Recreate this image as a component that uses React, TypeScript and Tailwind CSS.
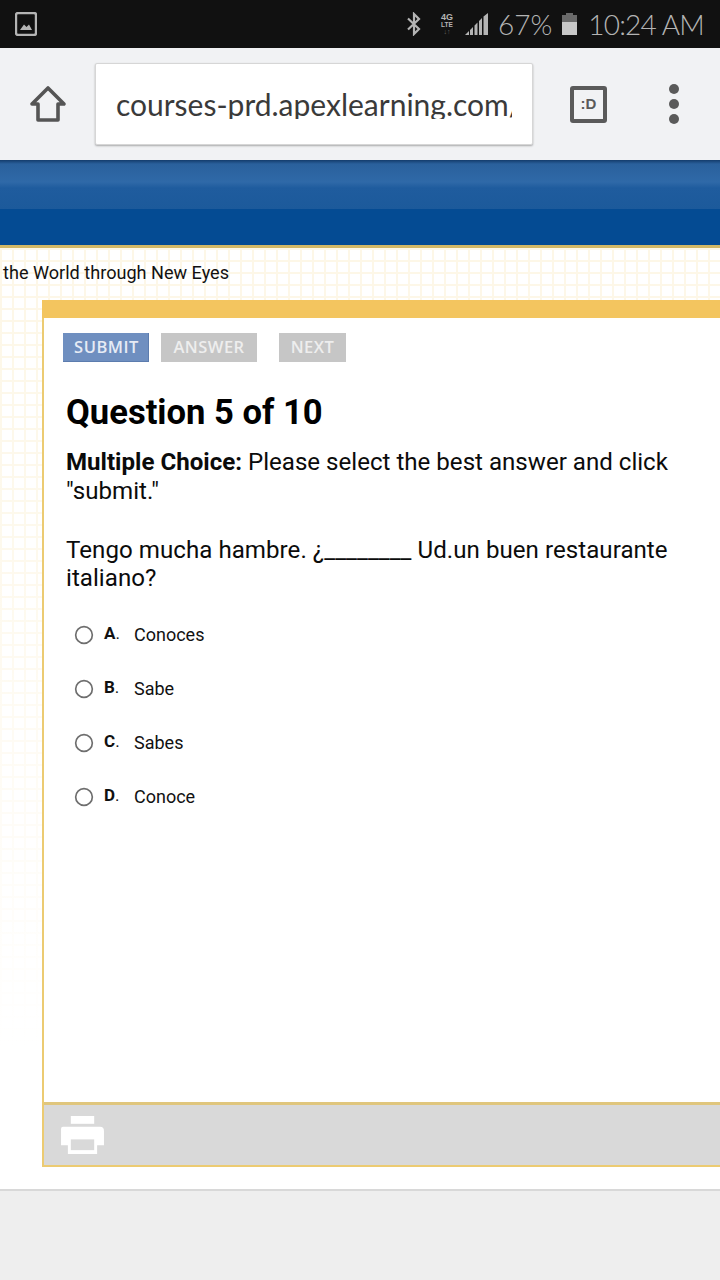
import { Circle } from 'lucide-react'

const hand = { fontFamily: '"Lato", "Open Sans", sans-serif' }

function StatusBar() {
  return (
    <div className="h-12 bg-[#111111] flex items-center pl-[15px] pr-[16px] text-[#b4b4b4]">
      <svg width="22" height="24" viewBox="0 0 22 24" fill="none">
        <rect x="1" y="1" width="20" height="22" rx="2" stroke="#b4b4b4" strokeWidth="2.4" />
        <path d="M5 18 L9 12.5 L11.5 15 L14 12.5 L17 18 Z" fill="#b4b4b4" />
      </svg>
      <div className="ml-auto flex items-center">
        <svg width="16" height="24" viewBox="0 0 16 24" fill="none" stroke="#b4b4b4" strokeWidth="2.2">
          <path d="M2 6.5 L13 17 L8 22 V2 L13 7 L2 17.5" />
        </svg>
        <div className="ml-[18px] mr-[1px] w-[14px] flex flex-col items-center leading-none text-[#b4b4b4]" style={{ fontFamily: '"Liberation Sans", sans-serif' }}>
          <span className="text-[9px] font-bold h-[8px] leading-[8px]">4G</span>
          <span className="text-[6.5px] font-bold h-[7px] leading-[7px]">LTE</span>
          <span className="text-[7px] h-[7px] leading-[7px] text-[#666666]">↓↑</span>
        </div>
        <svg className="ml-[10px]" width="24" height="24" viewBox="0 0 24 24" fill="#b4b4b4">
          <path d="M0 23 L4 19 V23 Z M5 23 V18 L8 15 V23 Z M9.500 23 V13.500 L12.500 10.500 V23 Z M14 23 V9 L17 6 V23 Z M18.500 23 V4.500 L23 1 V23 Z" />
        </svg>
        <span className="ml-[9px] text-[28px] leading-none font-light" style={hand}>67%</span>
        <svg className="ml-[9px]" width="17" height="24" viewBox="0 0 17 24">
          <rect x="5" y="1" width="7" height="3" fill="#6a6a6a" />
          <rect x="1" y="3" width="15" height="8" fill="#6a6a6a" />
          <rect x="1" y="10" width="15" height="13" fill="#c8c8c8" />
        </svg>
        <span className="ml-[10px] text-[28px] leading-none font-light tracking-[-0.8px]" style={hand}>10:24 AM</span>
      </div>
    </div>
  )
}

function BrowserBar() {
  return (
    <div className="h-28 bg-[#f1f2f4] flex items-center pl-[29px]">
      <svg width="38" height="38" viewBox="0 0 38 38" fill="none" stroke="#555555" strokeWidth="3.600" strokeLinejoin="round">
        <path d="M19 3 L35 19 H29 V35 H9 V19 H3 Z" />
      </svg>
      <div className="ml-[28px] w-[438px] h-[82px] bg-white rounded-[2px] border border-[#d6d6d6] shadow-[0_1px_2px_rgba(0,0,0,0.3)] flex items-center pl-[20px] overflow-hidden">
        <span className="text-[30px] leading-none text-[#3a3a3a] whitespace-nowrap w-[396px] overflow-hidden" style={hand}>
          courses-prd.apexlearning.com/
        </span>
      </div>
      <div className="ml-[37px] w-[37px] h-[37px] mt-px border-[4px] border-[#5a5a5a] rounded-[3px] flex items-center justify-center text-[15px] font-bold text-[#5a5a5a]" style={{ fontFamily: '"Liberation Sans", sans-serif' }}>
        :D
      </div>
      <div className="ml-[62px] flex flex-col gap-[5px]">
        <div className="w-[10px] h-[10px] rounded-full bg-[#5a5a5a]" />
        <div className="w-[10px] h-[10px] rounded-full bg-[#5a5a5a]" />
        <div className="w-[10px] h-[10px] rounded-full bg-[#5a5a5a]" />
      </div>
    </div>
  )
}

function Banner() {
  return (
    <div className="h-[88px] flex flex-col">
      <div className="h-[49px] bg-[linear-gradient(#143c6c_0px,#2a609c_4px,#2f69a8_22px,#1f5c9e_28px,#1c5a9b_49px)]" />
      <div className="h-[36px] bg-[#044b93]" />
      <div className="h-[3px] bg-[#d2b865]" />
    </div>
  )
}

const options = [
  { letter: 'A', text: 'Conoces' },
  { letter: 'B', text: 'Sabe' },
  { letter: 'C', text: 'Sabes' },
  { letter: 'D', text: 'Conoce' },
]

function Option({ letter, text }: { letter: string; text: string }) {
  return (
    <div className="h-[54px] flex items-center text-[18px] text-[#111111] pl-[30px]">
      <Circle size={20} strokeWidth={2} className="text-[#6e6e6e] mt-[2px]" />
      <span className="ml-[10px] w-[30px] -mt-[1px] text-[17px]">
        <span className="font-bold">{letter}</span>.
      </span>
      <span>{text}</span>
    </div>
  )
}

function Card() {
  return (
    <div className="ml-[42px] mt-[15px] h-[867px] border-l-2 border-b-2 border-[#eccb72] flex flex-col bg-white">
      <div className="h-[18px] -ml-[2px] bg-[#f3c55f] shrink-0" />
      <div className="flex-1 flex flex-col">
        <div className="flex mt-[15px] ml-[19px] text-[16.5px] font-semibold text-[#e6ebf5] tracking-[0.5px] h-[29px]" style={{ fontFamily: '"Open Sans", sans-serif' }}>
          <div className="w-[86px] pl-[2px] bg-[#6f8fc0] border-b border-r border-[#5c7cae] flex items-center justify-center">SUBMIT</div>
          <div className="ml-[12px] w-[96px] bg-[#c6c6c6] text-[#eeeeee] flex items-center justify-center">ANSWER</div>
          <div className="ml-[22px] w-[67px] bg-[#c6c6c6] text-[#eeeeee] flex items-center justify-center">NEXT</div>
        </div>
        <div className="ml-[22px] mt-[29px] text-[34.6px] leading-[42px] font-bold text-black">Question 5 of 10</div>
        <p className="ml-[22px] mt-[15px] w-[620px] text-[24.1px] leading-[29px] text-[#0b0b0b]">
          <span className="font-bold">Multiple Choice:</span> Please select the best answer and click "submit."
        </p>
        <p className="ml-[22px] mt-[30px] w-[620px] text-[24.1px] tracking-[0.04px] leading-[28px] text-[#0b0b0b]">
          Tengo mucha hambre. ¿________ Ud.un buen restaurante italiano?
        </p>
        <div className="mt-[15px]">
          {options.map(o => (
            <Option key={o.letter} letter={o.letter} text={o.text} />
          ))}
        </div>
      </div>
      <div className="h-[63px] shrink-0 bg-[#d9d9d9] border-t-[3px] border-[#e0c67d] flex items-center pl-[17px]">
        <svg width="43" height="39" viewBox="0 0 44 40" fill="white">
          <rect x="10" y="0" width="24" height="8" />
          <path d="M2 11 H40 Q44 11 44 15 V30 H37 V39 H7 V30 H0 V13 Q0 11 2 11 Z" />
          <rect x="10" y="24" width="24" height="11" fill="#d9d9d9" />
        </svg>
      </div>
    </div>
  )
}

export default function App() {
  return (
    <div className="w-[720px] h-[1280px] overflow-hidden bg-[#eeeeee] flex flex-col" style={{ fontFamily: 'Roboto, sans-serif' }}>
      <StatusBar />
      <BrowserBar />
      <Banner />
      <div className="h-[943px] border-b-2 border-[#d8d8d8] relative bg-white shrink-0">
        <div className="absolute inset-0 bg-[linear-gradient(#fdf7e7_2px,transparent_2px),linear-gradient(90deg,#fdf7e7_2px,transparent_2px)] bg-[size:12px_12px]" />
        <div className="absolute inset-0 bg-[linear-gradient(rgba(255,255,255,0)_0px,rgba(255,255,255,0.25)_300px,rgba(255,255,255,1)_800px)]" />
        <div className="relative">
          <div className="pl-[3px] pt-[13px] text-[18.1px] leading-[24px] text-[#111111]">the World through New Eyes</div>
          <Card />
        </div>
      </div>
    </div>
  )
}
